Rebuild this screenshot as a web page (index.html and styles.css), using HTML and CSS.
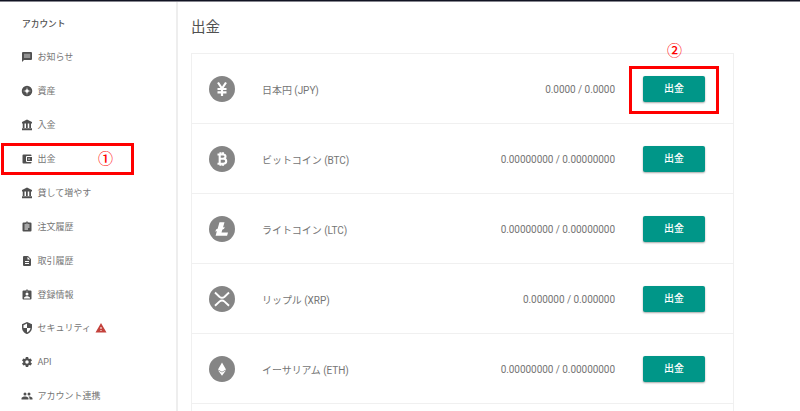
FILE: index.html
```html
<!DOCTYPE html>
<html lang="ja">

<head>
  <meta charset="utf-8" />
  <meta name="viewport" content="width=device-width, initial-scale=1.0" />
  <title>出金</title>
  <link rel="stylesheet" href="styles.css">
</head>

<body>
  <div class="topbar"></div>
  <div class="page">
    <nav class="sidebar">
      <div class="sidebar-title">アカウント</div>
      <a class="item">
        <svg viewBox="0 0 24 24"><path d="M20 2H4a2 2 0 0 0-2 2v18l4-4h14a2 2 0 0 0 2-2V4a2 2 0 0 0-2-2z" /><path class="soft" d="M6 5.500h12.500v8.500H6z" /></svg>
        <span>お知らせ</span>
      </a>
      <a class="item">
        <svg viewBox="0 0 24 24"><circle cx="12" cy="12" r="10.500" /><path class="cut" d="M12 5v14M5 12h14" /><circle class="hole" cx="12" cy="12" r="3.500" /></svg>
        <span>資産</span>
      </a>
      <a class="item">
        <svg viewBox="0 0 24 24"><path d="M3.500 9v9h3.500V9zM10 9v9h3.500V9zM2 22.500h20V18.500H2zM16.500 9v9H20V9zM12 1L2 6v3h20V6z" /></svg>
        <span>入金</span>
      </a>
      <a class="item">
        <svg viewBox="0 0 24 24"><path d="M21 18v1a2 2 0 0 1-2 2H5a2 2 0 0 1-2-2V5a2 2 0 0 1 2-2h14a2 2 0 0 1 2 2v1h-9a2 2 0 0 0-2 2v8a2 2 0 0 0 2 2h9zm-9-2h10V8H12v8zm4-2.500a1.500 1.500 0 1 1 0-3 1.500 1.500 0 0 1 0 3z" /></svg>
        <span>出金</span>
        <b class="mark mark-menu">①</b>
        <i class="frame frame-menu"></i>
      </a>
      <a class="item">
        <svg viewBox="0 0 24 24"><path d="M3.500 9v9h3.500V9zM10 9v9h3.500V9zM2 22.500h20V18.500H2zM16.500 9v9H20V9zM12 1L2 6v3h20V6z" /></svg>
        <span>貸して増やす</span>
      </a>
      <a class="item">
        <svg viewBox="0 0 24 24"><path d="M19 3h-4.200a3 3 0 0 0-5.600 0H5a2 2 0 0 0-2 2v14a2 2 0 0 0 2 2h14a2 2 0 0 0 2-2V5a2 2 0 0 0-2-2zm-7 0a1 1 0 1 1 0 2 1 1 0 0 1 0-2zm2 14H7v-2h7v2zm3-4H7v-2h10v2zm0-4H7V7h10v2z" /></svg>
        <span>注文履歴</span>
      </a>
      <a class="item">
        <svg viewBox="0 0 24 24"><path d="M14 2H6a2 2 0 0 0-2 2v16a2 2 0 0 0 2 2h12a2 2 0 0 0 2-2V8l-6-6zm2 16H8v-2h8v2zm0-4H8v-2h8v2zm-3-5V3.500L18.500 9H13z" /></svg>
        <span>取引履歴</span>
      </a>
      <a class="item">
        <svg viewBox="0 0 24 24"><path d="M19 3h-4.200a3 3 0 0 0-5.600 0H5a2 2 0 0 0-2 2v14a2 2 0 0 0 2 2h14a2 2 0 0 0 2-2V5a2 2 0 0 0-2-2zm-7 0a1 1 0 1 1 0 2 1 1 0 0 1 0-2zm0 4a3 3 0 1 1 0 6 3 3 0 0 1 0-6zm6 12H6v-1.400c0-2 4-3.100 6-3.100s6 1.100 6 3.100V19z" /></svg>
        <span>登録情報</span>
      </a>
      <a class="item">
        <svg viewBox="0 0 24 24"><path fill-rule="evenodd" d="M12 0L2 4.500V11c0 6 4.200 11.500 10 13 5.800-1.500 10-7 10-13V4.500zM12 3.200V12h7c-.5 4-3.300 7.600-7 8.800V12H5V6.300z" /></svg>
        <span>セキュリティ</span>
        <svg class="warn" viewBox="0 0 24 24"><path d="M1 21h22L12 2 1 21zm12-3h-2v-2h2v2zm0-4h-2v-4h2v4z" /></svg>
      </a>
      <a class="item">
        <svg viewBox="0 0 24 24"><path d="M19.430 12.980a8 8 0 0 0 0-1.960l2.110-1.650a.5.5 0 0 0 .12-.64l-2-3.460a.5.5 0 0 0-.61-.22l-2.490 1a7.300 7.300 0 0 0-1.690-.98l-.38-2.650A.5.5 0 0 0 14 2h-4a.5.5 0 0 0-.49.42l-.38 2.650c-.61.25-1.170.59-1.690.98l-2.490-1a.5.5 0 0 0-.61.22l-2 3.460a.5.5 0 0 0 .12.64l2.110 1.650a8 8 0 0 0 0 1.960l-2.110 1.650a.5.5 0 0 0-.12.64l2 3.460c.12.22.39.3.61.22l2.490-1c.52.4 1.080.73 1.690.98l.38 2.650c.03.24.24.42.49.42h4c.25 0 .46-.18.49-.42l.38-2.650c.61-.25 1.170-.59 1.690-.98l2.490 1c.23.09.49 0 .61-.22l2-3.460a.5.5 0 0 0-.12-.64l-2.110-1.650zM12 15.500a3.500 3.500 0 1 1 0-7 3.500 3.500 0 0 1 0 7z" /></svg>
        <span>API</span>
      </a>
      <a class="item">
        <svg viewBox="0 0 24 24"><path d="M16 11a3 3 0 1 0 0-6 3 3 0 0 0 0 6zm-8 0a3 3 0 1 0 0-6 3 3 0 0 0 0 6zm0 2c-2.330 0-7 1.170-7 3.500V19h14v-2.500C15 14.170 10.330 13 8 13zm8 0c-.29 0-.62.02-.97.050 1.160.84 1.970 1.970 1.970 3.450V19h6v-2.500c0-2.330-4.670-3.500-7-3.500z" /></svg>
        <span>アカウント連携</span>
      </a>
    </nav>

    <main class="content">
      <h1>出金</h1>
      <div class="list">
        <div class="row">
          <svg class="coin" viewBox="0 0 26 26"><circle cx="13" cy="13" r="13" /><path class="line yen" d="M9 6.500L13 12.500l4-6M13 12v8M8.500 13h9M8.500 16.400h9" /></svg>
          <span class="name">日本円 (JPY)</span>
          <span class="amount">0.0000 / 0.0000</span>
          <div class="action">
            <button class="btn" type="button">出金</button>
            <b class="mark mark-button">②</b>
            <i class="frame frame-button"></i>
          </div>
        </div>
        <div class="row">
          <svg class="coin" viewBox="0 0 26 26"><circle cx="13" cy="13" r="13" /><path class="line btc" d="M8.500 8.500H14q2.500 0 2.500 2.100T14 12.800h-3H14.300q2.900 0 2.900 2.400T14.300 17.700H8.500M10.700 8v10M11.500 6.300v2.500M14 6.300v2.500M11.500 17.200V19.700M14 17.200V19.700" /></svg>
          <span class="name">ビットコイン (BTC)</span>
          <span class="amount">0.00000000 / 0.00000000</span>
          <div class="action"><button class="btn" type="button">出金</button></div>
        </div>
        <div class="row">
          <svg class="coin" viewBox="0 0 26 26"><circle cx="13" cy="13" r="13" /><path class="fill" d="M10.500 6.200h5l-1.500 5.200 1.700-.7-.6 2.100-1.800.9-.8 2.700h6.500l-.9 3.400H6.600l1.300-4.700-1.500.6.6-2.200 1.600-.7z" /></svg>
          <span class="name">ライトコイン (LTC)</span>
          <span class="amount">0.00000000 / 0.00000000</span>
          <div class="action"><button class="btn" type="button">出金</button></div>
        </div>
        <div class="row">
          <svg class="coin" viewBox="0 0 26 26"><circle cx="13" cy="13" r="13" /><path class="line xrp" d="M6 6.500l4.400 4.200q2.600 2.300 5.200 0L20 6.500M6 19.800l4.400-4.200q2.600-2.300 5.200 0L20 19.800" /></svg>
          <span class="name">リップル (XRP)</span>
          <span class="amount">0.000000 / 0.000000</span>
          <div class="action"><button class="btn" type="button">出金</button></div>
        </div>
        <div class="row">
          <svg class="coin" viewBox="0 0 26 26"><circle cx="13" cy="13" r="13" /><path class="fill" d="M13 6.500l4 7-4 2.300-4-2.300zM9 14.300l4 2.200 4-2.200L13 19.800z" /></svg>
          <span class="name">イーサリアム (ETH)</span>
          <span class="amount">0.00000000 / 0.00000000</span>
          <div class="action"><button class="btn" type="button">出金</button></div>
        </div>
      </div>
    </main>
  </div>
</body>

</html>
```
FILE: styles.css
```css
* {
  box-sizing: border-box;
}

body {
  margin: 0;
  background: #fff;
  color: #757575;
  font-family: Roboto, "Noto Sans CJK JP", sans-serif;
}

.topbar {
  height: 2px;
  background: #111323;
  border-bottom: 1px solid #85858e;
}

.page {
  display: flex;
  height: 409px;
}

.sidebar {
  width: 178px;
  flex-shrink: 0;
  padding-top: 13px;
  border-right: 2px solid #eee;
}

.sidebar-title {
  height: 25.4px;
  padding-left: 22px;
  font-size: 8.7px;
  line-height: 18px;
  font-weight: 500;
  color: #505050;
}

.item {
  position: relative;
  display: flex;
  align-items: center;
  height: 33.9px;
  padding-left: 21px;
  font-size: 9px;
  line-height: 14px;
  white-space: nowrap;
}

.item:last-child {
  height: 31px;
  padding-top: 3px;
}

.item svg {
  width: 12px;
  height: 12px;
  margin-right: 4.5px;
  fill: #505050;
}

.item .soft {
  fill: #929292;
}

.item .cut {
  stroke: #fff;
  stroke-width: 1;
}

.item .hole {
  fill: #fff;
}

.item .warn {
  margin-left: 4px;
  fill: #c4423c;
}

.content {
  padding: 12px 0 0 13px;
}

h1 {
  height: 39px;
  margin: 0;
  font-size: 14.5px;
  line-height: 28px;
  font-weight: 400;
  color: #505050;
}

.list {
  width: 543px;
  height: 358px;
  border: 1px solid #f0f0f0;
  border-bottom: 0;
}

.row {
  display: flex;
  align-items: center;
  height: 70px;
  padding: 0 28px 0 17px;
  border-bottom: 1px solid #f0f0f0;
  font-size: 10px;
  letter-spacing: -0.05px;
}

.coin {
  width: 26px;
  height: 26px;
  margin-right: 27px;
  fill: #858585;
}

.coin .fill {
  fill: #fff;
}

.coin .line {
  fill: none;
  stroke: #fff;
}

.coin .yen {
  stroke-width: 2.2;
}

.coin .btc {
  stroke-width: 2.1;
}

.coin .xrp {
  stroke-width: 1.9;
}

.amount {
  margin-left: auto;
}

.name,
.amount {
  padding-top: 1px;
}

.action {
  position: relative;
  display: flex;
  margin-left: 28px;
}

.btn {
  width: 62px;
  height: 26px;
  padding: 0 0 2px;
  border: 0;
  border-radius: 2px;
  background: #009688;
  box-shadow: 0 1px 2px rgba(0, 0, 0, 0.35);
  color: #fff;
  font-family: inherit;
  font-size: 10px;
  font-weight: 500;
}

/* numbered step markers */
.mark {
  position: absolute;
  color: #f00;
  font-family: "Noto Sans CJK JP", sans-serif;
  font-size: 15px;
  line-height: 18px;
  font-weight: 500;
}

.mark-menu {
  left: 98px;
  top: 7px;
}

.mark-button {
  left: 24px;
  top: -35px;
}

.frame {
  position: absolute;
  border: 3px solid #f00;
}

.frame-menu {
  left: 1px;
  top: 1px;
  width: 133px;
  height: 32px;
}

.frame-button {
  left: -14px;
  top: -10px;
  width: 90px;
  height: 48px;
}
```
